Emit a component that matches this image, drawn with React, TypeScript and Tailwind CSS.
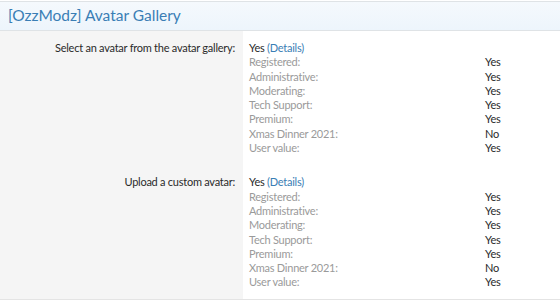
import React from "react"

const groups = [
  { name: "Registered", value: "Yes" },
  { name: "Administrative", value: "Yes" },
  { name: "Moderating", value: "Yes" },
  { name: "Tech Support", value: "Yes" },
  { name: "Premium", value: "Yes" },
  { name: "Xmas Dinner 2021", value: "No" },
  { name: "User value", value: "Yes" },
]

const permissions = [
  "Select an avatar from the avatar gallery:",
  "Upload a custom avatar:",
]

const App = () => {
  return (
    <div
      className="w-[560px] h-[300px] bg-white text-[11px] tracking-[-0.25px] text-[#2a2a2a] overflow-hidden"
      style={{ fontFamily: '"Segoe UI", Lato, "Noto Sans", sans-serif' }}
    >
      <div className="h-[30px] mt-px border-t border-b border-[#dfe3e6] bg-gradient-to-b from-[#f5f9fd] to-[#edf5fc] flex items-center px-2">
        <h2 className="text-[15.5px] tracking-normal text-[#3a7eb5]">[OzzModz] Avatar Gallery</h2>
      </div>
      <div className="flex flex-col border-b-2 border-[#e4e4e4]">
        {permissions.map((perm, idx) => (
          <div key={idx} className="flex leading-[14.3px]">
            <div className={`w-[243px] shrink-0 bg-[#f5f5f5] text-right pr-2 ${idx === 0 ? "pt-[10px]" : "pt-[20px]"}`}>
              {perm}
            </div>
            <div className={`flex-1 pl-1.5 ${idx === 0 ? "pt-[10px]" : "pt-[20px] pb-[9px]"}`}>
              <div>
                Yes <span className="text-[#3a7eb5]">(Details)</span>
              </div>
              {groups.map((g) => (
                <div key={g.name} className="flex">
                  <span className="w-[236px] text-[#9a9a9a]">{g.name}:</span>
                  <span>{g.value}</span>
                </div>
              ))}
            </div>
          </div>
        ))}
      </div>
    </div>
  )
}

export default App
